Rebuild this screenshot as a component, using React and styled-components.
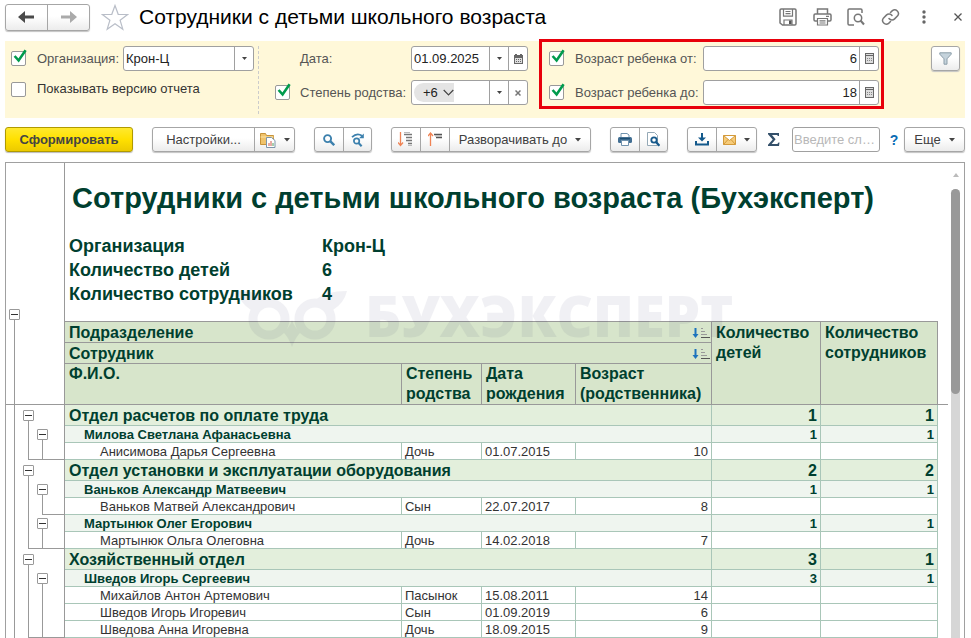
import React from "react";
import styled, { createGlobalStyle, css } from "styled-components";

const GlobalStyle = createGlobalStyle`
  *, *::before, *::after { box-sizing: border-box; }
  body {
    margin: 0;
    background: #fff;
    color: #404040;
    font-family: "Liberation Sans", Arial, sans-serif;
    font-size: 13px;
    line-height: 16px;
  }
  button, input, select { font: inherit; color: inherit; margin: 0; padding: 0; }
  button { cursor: pointer; }
  svg { display: block; flex: none; }
`;

const Page = styled.main`
  padding: 3px 6px 0 5px;
`;

/* ---------- title bar ---------- */

const TitleBar = styled.header`
  display: flex;
  align-items: center;
  height: 28px;
  margin-bottom: 10px;
`;

const buttonFace = css`
  background: linear-gradient(#fff, #fff 45%, #ececec);
  border: 1px solid #a6a6a6;
  box-shadow: 0 1px 1px #c4c4c4;
`;

const ButtonGroup = styled.div`
  display: flex;
  flex: none;
  height: 25px;
  border-radius: 3px;
  ${buttonFace}
`;

const NavGroup = styled(ButtonGroup)`
  width: 85px;
  height: 27px;
`;

const GroupButton = styled.button`
  display: flex;
  flex: ${(p) => (p.$width ? "none" : 1)};
  width: ${(p) => (p.$width ? `${p.$width}px` : "auto")};
  align-items: center;
  justify-content: center;
  gap: 8px;
  border: 0;
  background: none;
  white-space: nowrap;
  & + & { border-left: 1px solid #a6a6a6; }
`;

const PlainButton = styled.button`
  display: flex;
  flex: none;
  align-items: center;
  justify-content: center;
  border: 0;
  background: none;
`;

const StarButton = styled(PlainButton)`
  margin: 0 10px 0 11px;
`;

const Title = styled.h1`
  flex: 1;
  margin: 0;
  color: #000;
  font-size: 21px;
  font-weight: 400;
  line-height: 24px;
  white-space: nowrap;
`;

const TitleTools = styled.div`
  display: flex;
  align-items: center;
  gap: 20px;
`;

const ToolButton = styled(PlainButton)`
  width: 14px;
  height: 20px;
`;

/* ---------- filters ---------- */

const Filters = styled.section`
  display: flex;
  align-items: flex-start;
  height: 77px;
  padding: 5px 5px 0 6px;
  background: #fff8d9;
`;

const FilterColumn = styled.div`
  display: grid;
  flex: ${(p) => (p.$width ? "none" : 1)};
  width: ${(p) => (p.$width ? `${p.$width}px` : "auto")};
  gap: ${(p) => p.$gap}px;
`;

const HighlightedColumn = styled(FilterColumn)`
  position: relative;
  margin: 0 52px 0 21px;
  &::after {
    content: "";
    position: absolute;
    inset: -7px -5px -4px -10px;
    border: 3px solid #e8000b;
    pointer-events: none;
  }
`;

const FilterRow = styled.div`
  display: grid;
  grid-template-columns: 15px ${(p) => p.$cols};
  align-items: center;
  white-space: nowrap;
`;

const FilterLabel = styled.label`
  grid-column: 2;
  padding-left: ${(p) => p.$indent || 11}px;
  color: ${(p) => (p.$dark ? "#333" : "#555")};
`;

const Divider = styled.div`
  height: 68px;
  margin: 0 16px 0 4px;
  border-left: 1px dashed #ccc;
`;

const CheckHolder = styled.span`
  position: relative;
  width: 15px;
  height: 15px;
  input {
    display: block;
    width: 15px;
    height: 15px;
    appearance: none;
    border: 1px solid #999;
    border-radius: 2px;
    background: #fff;
  }
  svg {
    position: absolute;
    left: 2px;
    top: -2px;
    pointer-events: none;
  }
  input:not(:checked) + svg { display: none; }
`;

const Field = styled.div`
  display: flex;
  height: 25px;
  border: 1px solid #a0a0a0;
  border-radius: 3px;
  background: #fff;
  color: #222;
  overflow: hidden;
  input, select {
    flex: 1;
    min-width: 0;
    width: 0;
    padding: 0 2px;
    border: 0;
    outline: 0;
    appearance: none;
    background: none;
    text-align: ${(p) => (p.$number ? "right" : "left")};
  }
`;

const FieldButton = styled.button`
  display: flex;
  flex: none;
  width: 19px;
  align-items: center;
  justify-content: center;
  border: 0;
  border-left: 1px solid #a0a0a0;
  background: none;
`;

const SelectArrow = styled.span`
  display: flex;
  width: 19px;
  align-items: center;
  justify-content: center;
  border-left: 1px solid #a0a0a0;
`;

const ChipArea = styled.div`
  flex: 1;
  padding: 2px;
`;

const Chip = styled.button`
  display: flex;
  align-items: center;
  gap: 5px;
  height: 19px;
  padding: 0 0 0 9px;
  border: 0;
  border-radius: 10px 0 0 10px;
  background: #e4e4e4;
`;

const FunnelButton = styled.button`
  display: flex;
  flex: none;
  width: 29px;
  height: 25px;
  align-items: center;
  justify-content: center;
  border-radius: 3px;
  ${buttonFace}
`;

/* ---------- toolbar ---------- */

const Toolbar = styled.div`
  display: flex;
  align-items: center;
  gap: 19px;
  margin: 9px 0 10px;
`;

const GenerateButton = styled.button`
  flex: none;
  width: 128px;
  height: 25px;
  border: 1px solid #b09a00;
  border-radius: 3px;
  background: linear-gradient(#ffe92e, #ffe000 50%, #ecca00);
  box-shadow: 0 1px 1px #bbb;
  color: #444;
  font-weight: 700;
`;

const SearchTools = styled.div`
  display: flex;
  flex: 1;
  min-width: 0;
  align-items: center;
  margin: 0 -13px 0 -8px;
`;

const SearchInput = styled.input`
  flex: 1;
  width: 0;
  min-width: 0;
  height: 25px;
  margin: 0 10px 0 12px;
  padding: 0 1px;
  border: 1px solid #a0a0a0;
  border-radius: 3px;
  background: #fff;
  text-overflow: ellipsis;
  &::placeholder { color: #b8b8b8; opacity: 1; }
`;

const HelpButton = styled(PlainButton)`
  width: 8px;
  color: #0a6cb4;
  font-size: 14px;
  font-weight: 700;
`;

/* ---------- report ---------- */

const Report = styled.section`
  position: relative;
  display: flex;
  border: 1px solid #a0a0a0;
  border-bottom: 0;
`;

const Sheet = styled.div`
  flex: 1;
  min-width: 0;
  color: #003f2f;
`;

const SheetTop = styled.div`
  display: flex;
  height: 158px;
`;

const TopGutter = styled.div`
  display: flex;
  flex: none;
  width: 59px;
  align-items: flex-end;
  padding-left: 1px;
  border-right: 1px solid #999;
`;

const SheetHead = styled.div`
  padding: 17px 0 0 4px;
  font-weight: 700;
`;

const ReportTitle = styled.h2`
  margin: 0 0 18px 3px;
  font-size: 29px;
  line-height: 36px;
  white-space: nowrap;
`;

const Params = styled.dl`
  display: grid;
  grid-template-columns: 253px auto;
  margin: 0;
  font-size: 18px;
  line-height: 24px;
  dt, dd { margin: 0; white-space: nowrap; }
`;

const Table = styled.table`
  width: 100%;
  table-layout: fixed;
  border-collapse: separate;
  border-spacing: 0;
  th, td {
    padding: 1px 3px 0 4px;
    border: solid #a9c6b8;
    border-width: 0 1px 1px 0;
    text-align: left;
    vertical-align: top;
    white-space: nowrap;
  }
`;

const HeadCell = styled.th`
  && {
    height: ${(p) => p.$h}px;
    padding-top: ${(p) => (p.$flush ? 0 : 1)}px;
    border-color: #999;
    border-top-width: ${(p) => (p.$top ? 1 : 0)}px;
    background: #d7e5cb;
    font-size: 16px;
    line-height: ${(p) => (p.$single ? 19 : 20)}px;
  }
`;

const HeadInner = styled.div`
  display: flex;
  align-items: center;
  justify-content: space-between;
  margin-right: -2px;
`;

const GutterCell = styled.td`
  && {
    height: ${(p) => p.$h}px;
    padding: 0 0 0 1px;
    border-color: #999;
    border-bottom-width: ${(p) => (p.$frozen ? 1 : 0)}px;
  }
`;

const TailCell = styled.td`
  && {
    padding: 0;
    border-color: #999;
    border-right-width: 0;
    border-bottom-width: ${(p) => (p.$frozen ? 1 : 0)}px;
  }
`;

const Branches = styled.div`
  display: flex;
  height: ${(p) => p.$h}px;
`;

const Slot = styled.div`
  position: relative;
  display: flex;
  width: 14px;
  min-height: 13px;
  align-items: center;
  padding-left: 2px;
  ${(p) => p.$line && css`
    &::before {
      content: "";
      position: absolute;
      left: 7px;
      top: ${p.$line === "below" ? "50%" : 0};
      bottom: 0;
      width: 1px;
      background: #999;
    }
  `}
  ${(p) => p.$corner && css`
    &::after {
      content: "";
      position: absolute;
      left: ${p.$corner === "start" ? 7 : 0}px;
      right: 0;
      bottom: 0;
      height: 1px;
      background: #999;
    }
  `}
`;

const BranchTail = styled.div`
  flex: 1;
  border-bottom: ${(p) => (p.$closed ? "1px solid #999" : 0)};
`;

const ToggleButton = styled.button`
  position: relative;
  z-index: 1;
  display: flex;
  width: 11px;
  height: 11px;
  align-items: center;
  justify-content: center;
  border: 1px solid #999;
  border-radius: 1px;
  background: #fff;
  &::before {
    content: "";
    width: 7px;
    height: 1px;
    background: #333;
  }
`;

const rowKinds = {
  group: { height: 21, font: "700 16px/19px", bg: "#e3efdc", indent: 4, color: "#003f2f" },
  person: { height: 17, font: "700 13px/15px", bg: "#eff5ef", indent: 19, color: "#003f2f" },
  child: { height: 17, font: "400 13px/15px", bg: "#fff", indent: 35, color: "#333" },
};

const Cell = styled.td`
  && {
    height: ${(p) => rowKinds[p.$kind].height}px;
    padding-left: ${(p) => (p.$name ? rowKinds[p.$kind].indent : 3)}px;
    background: ${(p) => rowKinds[p.$kind].bg};
    color: ${(p) => rowKinds[p.$kind].color};
    font: ${(p) => rowKinds[p.$kind].font} "Liberation Sans", Arial, sans-serif;
    text-align: ${(p) => (p.$right ? "right" : "left")};
  }
`;

const ScrollBar = styled.div`
  display: flex;
  flex-direction: column;
  align-items: center;
  width: 9px;
  margin: 9px 4px 0 3px;
`;

const ScrollTrack = styled.div`
  flex: 1;
  width: 9px;
  margin-top: 11px;
  border-radius: 5px 5px 0 0;
  background: #d6d6d6;
`;

const ScrollThumb = styled.div`
  height: 205px;
  border-radius: 5px;
  background: #999;
`;

const Watermark = styled.div`
  position: absolute;
  left: 230px;
  top: 127px;
  display: flex;
  align-items: flex-start;
  gap: 17px;
  color: #141450;
  opacity: 0.06;
  font: 800 56px/50px "Open Sans", "Noto Sans", sans-serif;
  pointer-events: none;
`;

/* ---------- icons ---------- */

const Arrow = ({ flip, color }) => (
  <svg width="17" height="12" viewBox="0 0 17 12" fill={color}>
    <path transform={flip ? "translate(17 0) scale(-1 1)" : undefined} d="M0 6 7 0v4.5h9v3H7V12z" />
  </svg>
);

const Star = () => (
  <svg width="28" height="27" viewBox="0 0 28 27" fill="#fff" stroke="#b9bec8" strokeWidth="1.2">
    <path d="M14 1.5 17.2 10.3 26.6 10.5 19.1 16.2 21.8 25.2 14 19.8 6.2 25.2 8.9 16.2 1.4 10.5 10.8 10.3z" />
  </svg>
);

const Caret = () => (
  <svg width="6" height="4" viewBox="0 0 6 4" fill="#444"><path d="M0 0h6L3 3.5z" /></svg>
);

const SmallCaret = () => (
  <svg width="5" height="3" viewBox="0 0 5 3" fill="#444"><path d="M0 0h5L2.5 3z" /></svg>
);

const Tick = () => (
  <svg width="14" height="14" viewBox="0 0 14 14" fill="none" stroke="#009b4c" strokeWidth="2.6">
    <path d="M1.6 7 5.6 11.5 12.6 1.2" />
  </svg>
);

const CalendarIcon = () => (
  <svg width="9" height="10" viewBox="0 0 9 10">
    <path fill="#666" d="M0 1h1V0h2v1h3V0h2v1h1v9H0z" />
    <path fill="#ddd" d="M1 4h7v5H1z" />
    <path stroke="#666" strokeWidth="1" strokeDasharray="1 1" d="M2 5.5h6M2 7.5h6" />
  </svg>
);

const CalcIcon = () => (
  <svg width="9" height="11" viewBox="0 0 9 11" fill="none" stroke="#666">
    <rect x=".5" y=".5" width="8" height="10" fill="#ddd" />
    <path d="M1 2.5h7" />
    <path stroke="#888" strokeDasharray="1 1" d="M2 5.5h6M2 7.5h6" />
  </svg>
);

const ClearIcon = () => (
  <svg width="6" height="6" viewBox="0 0 6 6" stroke="#777" strokeWidth="1.5"><path d="m.5.5 5 5m0-5-5 5" /></svg>
);

const ChevronIcon = () => (
  <svg width="11" height="7" viewBox="0 0 11 7" fill="none" stroke="#444" strokeWidth="1.2"><path d="m.7 1 4.8 5 4.8-5" /></svg>
);

const FunnelIcon = () => (
  <svg width="13" height="13" viewBox="0 0 13 13" fill="#c5d3dc" stroke="#8b9da9">
    <path d="M.8.8h11.4v1.4L8 6.8v5.4H5V6.8L.8 2.2z" />
  </svg>
);

const FloppyIcon = () => (
  <svg width="18" height="18" viewBox="0 0 18 18" fill="none" stroke="#777" strokeWidth="1.5">
    <path d="M1 2.2Q1 1 2.2 1h13.6Q17 1 17 2.2v13.6q0 1.2-1.2 1.2H3.5L1 15z" />
    <path d="M4.5 1v7.2h9V1M6.5 3.5h5M6.5 5.7h5" strokeWidth="1.2" />
    <path d="M5 17v-5h8v5" strokeWidth="1.2" /><path d="M10 12.5h2.5V16H10z" fill="#555" stroke="none" />
  </svg>
);

const PrinterIcon = () => (
  <svg width="19" height="18" viewBox="0 0 19 18" fill="none" stroke="#777" strokeWidth="1.5">
    <path d="M4.5 6V1h10v5M4.5 13H2.2Q1 13 1 11.8V7.2Q1 6 2.2 6h14.6Q18 6 18 7.2v4.6q0 1.2-1.2 1.2h-2.3" />
    <path d="M4.5 10.5h10v6.5h-10zM6.5 12.8h6M6.5 15h6M13 8.3h3" strokeWidth="1.2" />
  </svg>
);

const PreviewIcon = () => (
  <svg width="18" height="18" viewBox="0 0 18 18" fill="none" stroke="#777" strokeWidth="1.5">
    <path d="M7 17H2.2Q1 17 1 15.8V2.2Q1 1 2.2 1h11.6Q15 1 15 2.2V5" />
    <circle cx="11" cy="10" r="3.7" /><path d="m13.5 12.5 3.5 4" strokeWidth="2" />
  </svg>
);

const LinkIcon = () => (
  <svg width="19" height="18" viewBox="0 0 24 24" fill="none" stroke="#777" strokeWidth="2" strokeLinecap="round">
    <path d="M10 14a5 5 0 0 0 7.5.5l4-4a5 5 0 0 0-7-7L12 6" />
    <path d="M14 10a5 5 0 0 0-7.5-.5l-4 4a5 5 0 0 0 7 7L12 18" />
  </svg>
);

const DotsIcon = () => (
  <svg width="4" height="14" viewBox="0 0 4 14" fill="#666">
    <circle cx="2" cy="2" r="1.7" /><circle cx="2" cy="7" r="1.7" /><circle cx="2" cy="12" r="1.7" />
  </svg>
);

const CloseIcon = () => (
  <svg width="8" height="8" viewBox="0 0 8 8" stroke="#555" strokeWidth="1.3"><path d="m.5.5 7 7m0-7-7 7" /></svg>
);

const FolderIcon = () => (
  <svg width="16" height="16" viewBox="0 0 16 16">
    <path d="M.5 12.5v-11h5l1 2h7v9z" fill="#f0c36b" stroke="#c79339" />
    <path d="M.5 5h13" stroke="#fbe3a8" />
    <path d="M6.5 5.5h5l3.5 3v7H6.5z" fill="#fff" stroke="#7d95aa" />
    <path d="M9 14v-3M11 14v-5" stroke="#d0584b" /><path d="M13 14v-3" stroke="#4fa05a" />
  </svg>
);

const MagnifierIcon = () => (
  <svg width="12" height="12" viewBox="0 0 12 12" fill="none" stroke="#3c80ad">
    <circle cx="4.6" cy="4.6" r="3.5" strokeWidth="1.9" /><path d="m7.2 7.2 4 4" strokeWidth="2.4" />
  </svg>
);

const MagnifierNextIcon = () => (
  <svg width="14" height="14" viewBox="0 0 14 14" fill="none" stroke="#3c80ad">
    <path d="M1 4.2Q6 -.8 11 2.8" strokeWidth="1.7" /><path d="M12.8.5v4.8H8z" fill="#3c80ad" stroke="none" />
    <circle cx="5.6" cy="8" r="2.7" strokeWidth="1.7" /><path d="m7.6 10 3 3.2" strokeWidth="2.1" />
  </svg>
);

const ExpandIcon = () => (
  <svg width="16" height="15" viewBox="0 0 16 15" fill="none">
    <path d="M2.5 0v13M0 10.5l2.5 3 2.5-3" stroke="#ef8354" strokeWidth="1.3" />
    <path d="M6 2.5h8M8 5.5h6M8 8.5h6M10 11.5h4" stroke="#777" strokeWidth="1.3" />
    <path d="M6 .5h6M10 13.5h4" stroke="#bbb" />
  </svg>
);

const CollapseIcon = () => (
  <svg width="15" height="15" viewBox="0 0 15 15" fill="none">
    <path d="M2.5 14V1M0 4l2.5-3L5 4" stroke="#ef8354" strokeWidth="1.3" />
    <path d="M6 2.5h8M8 5.5h6" stroke="#555" strokeWidth="1.4" /><path d="M7 4h7" stroke="#aaa" />
  </svg>
);

const PrintColorIcon = () => (
  <svg width="14" height="13" viewBox="0 0 14 13">
    <path d="M3 4V.5h6L11 2v2" fill="#fff" stroke="#7193ae" />
    <rect y="4" width="14" height="6" rx="1.5" fill="#426f93" />
    <path d="M3.5 7.5h7v5h-7z" fill="#fff" stroke="#7193ae" />
    <path d="M2 5.7h10" stroke="#16476b" />
  </svg>
);

const PageSearchIcon = () => (
  <svg width="13" height="15" viewBox="0 0 13 15" fill="none">
    <path d="M.5 13.5V.5h7l3 3v10z" fill="#fff" stroke="#95a9b6" />
    <circle cx="7" cy="8" r="2.7" fill="#fff" stroke="#16598b" strokeWidth="1.8" />
    <path d="m9 10 3.5 3.8" stroke="#16598b" strokeWidth="2.3" />
  </svg>
);

const DownloadIcon = () => (
  <svg width="14" height="13" viewBox="0 0 14 13" fill="#13598b">
    <path d="M6 0h2v4.5h3L7 8.5 3 4.5h3zM0 8h2v2.5h10V8h2v4.5H0z" />
  </svg>
);

const MailIcon = () => (
  <svg width="13" height="10" viewBox="0 0 13 10" fill="#f6cb79" stroke="#d39a3a">
    <path d="M.5.5h12v9H.5zM.5.5l6 5 6-5M.5 9.5l4.5-5M12.5 9.5 8 4.5" />
  </svg>
);

const SigmaIcon = () => (
  <svg width="12" height="13" viewBox="0 0 12 13" fill="#34506a">
    <path d="M0 0h11v3h-1L9 2H4l3.6 4.3L3.6 11H9.3l1.2-1.5H11.5L11 13H0v-1.2L4.7 6.5 0 1.3z" />
  </svg>
);

const SortIcon = () => (
  <svg width="18" height="12" viewBox="0 0 18 12" fill="none">
    <path d="M3.5 1v7" stroke="#1d73bd" strokeWidth="2" /><path d="M.5 7h6l-3 4z" fill="#1d73bd" />
    <path d="M9 1.5h2M9 4.5h4M9 7.5h6" stroke="#999" /><path d="M9 10.5h9" stroke="#555" />
  </svg>
);

const ScrollUpIcon = () => (
  <svg width="6" height="6" viewBox="0 0 6 6" fill="#bbb"><path d="M0 5h6L3 1z" /></svg>
);

const OwlIcon = () => (
  <svg width="112" height="57" viewBox="0 0 112 57" fill="none" stroke="currentColor" strokeWidth="9">
    <circle cx="33" cy="29" r="16" />
    <circle cx="79" cy="29" r="16" />
    <path
      fill="currentColor"
      stroke="none"
      d="M46 41Q53 40 56 30Q59 40 66 41Q60 46 56 57Q52 46 46 41zM1 1Q22 1 33 10L15 20Q4 13 1 1zM111 1Q90 1 79 10L97 20Q108 13 111 1z"
    />
  </svg>
);

/* ---------- composed parts ---------- */

const Check = ({ id, checked, label }) => (
  <CheckHolder>
    <input type="checkbox" id={id} defaultChecked={checked} aria-label={label} />
    <Tick />
  </CheckHolder>
);

const Toggle = () => <ToggleButton type="button" aria-label="Свернуть" />;

const cornerOf = (marks, i) => {
  const first = marks.indexOf("L");
  if (first < 0 || i < first) return null;
  return i === first ? "start" : "through";
};

const lineOf = { T: "below", "|": "full", L: "full" };

/* marks, one per level: "T" toggle, "|" line, "L" closing corner */
const Tree = ({ height, marks }) => (
  <Branches $h={height}>
    {marks.split("").map((m, i) => (
      <Slot key={i} $line={lineOf[m]} $corner={cornerOf(marks, i)}>
        {m === "T" && <Toggle />}
      </Slot>
    ))}
    <BranchTail $closed={marks.includes("L")} />
  </Branches>
);

const rows = [
  { kind: "group", tree: "|T ", name: "Отдел расчетов по оплате труда", kids: 1, staff: 1 },
  { kind: "person", tree: "||T", name: "Милова Светлана Афанасьевна", kids: 1, staff: 1 },
  { kind: "child", tree: "|LL", name: "Анисимова Дарья Сергеевна", rel: "Дочь", born: "01.07.2015", age: 10 },
  { kind: "group", tree: "|T ", name: "Отдел установки и эксплуатации оборудования", kids: 2, staff: 2 },
  { kind: "person", tree: "||T", name: "Ваньков Александр Матвеевич", kids: 1, staff: 1 },
  { kind: "child", tree: "||L", name: "Ваньков Матвей Александрович", rel: "Сын", born: "22.07.2017", age: 8 },
  { kind: "person", tree: "||T", name: "Мартынюк Олег Егорович", kids: 1, staff: 1 },
  { kind: "child", tree: "|LL", name: "Мартынюк Ольга Олеговна", rel: "Дочь", born: "14.02.2018", age: 7 },
  { kind: "group", tree: "|T ", name: "Хозяйственный отдел", kids: 3, staff: 1 },
  { kind: "person", tree: "||T", name: "Шведов Игорь Сергеевич", kids: 3, staff: 1 },
  { kind: "child", tree: "|||", name: "Михайлов Антон Артемович", rel: "Пасынок", born: "15.08.2011", age: 14 },
  { kind: "child", tree: "|||", name: "Шведов Игорь Игоревич", rel: "Сын", born: "01.09.2019", age: 6 },
  { kind: "child", tree: "|LL", name: "Шведова Анна Игоревна", rel: "Дочь", born: "18.09.2015", age: 9 },
];

const ReportRow = ({ row }) => (
  <tr>
    <GutterCell $h={rowKinds[row.kind].height}>
      <Tree height={rowKinds[row.kind].height} marks={row.tree} />
    </GutterCell>
    <Cell $kind={row.kind} $name colSpan={row.kind === "child" ? 1 : 4}>{row.name}</Cell>
    {row.kind === "child" && (
      <>
        <Cell $kind="child">{row.rel}</Cell>
        <Cell $kind="child">{row.born}</Cell>
        <Cell $kind="child" $right>{row.age}</Cell>
      </>
    )}
    <Cell $kind={row.kind} $right>{row.kids}</Cell>
    <Cell $kind={row.kind} $right>{row.staff}</Cell>
    <TailCell />
  </tr>
);

export default function App() {
  return (
    <Page>
      <GlobalStyle />
      <TitleBar>
        <NavGroup>
          <GroupButton type="button" aria-label="Назад"><Arrow color="#4a4a4a" /></GroupButton>
          <GroupButton type="button" aria-label="Вперед"><Arrow flip color="#aaa" /></GroupButton>
        </NavGroup>
        <StarButton type="button" aria-label="В избранное"><Star /></StarButton>
        <Title>Сотрудники с детьми школьного возраста</Title>
        <TitleTools>
          <ToolButton type="button" aria-label="Сохранить"><FloppyIcon /></ToolButton>
          <ToolButton type="button" aria-label="Печать"><PrinterIcon /></ToolButton>
          <ToolButton type="button" aria-label="Просмотр"><PreviewIcon /></ToolButton>
          <ToolButton type="button" aria-label="Ссылка"><LinkIcon /></ToolButton>
          <ToolButton type="button" aria-label="Меню"><DotsIcon /></ToolButton>
          <ToolButton type="button" aria-label="Закрыть"><CloseIcon /></ToolButton>
        </TitleTools>
      </TitleBar>

      <Filters>
        <FilterColumn $width={243} $gap={10}>
          <FilterRow $cols="1fr 131px">
            <Check id="use-org" checked label="Отбор по организации" />
            <FilterLabel htmlFor="org">Организация:</FilterLabel>
            <Field>
              <select id="org"><option>Крон-Ц</option></select>
              <SelectArrow><SmallCaret /></SelectArrow>
            </Field>
          </FilterRow>
          <FilterRow $cols="1fr">
            <Check id="show-version" />
            <FilterLabel htmlFor="show-version" $dark>Показывать версию отчета</FilterLabel>
          </FilterRow>
        </FilterColumn>
        <Divider />
        <FilterColumn $width={253} $gap={9}>
          <FilterRow $cols="1fr 117px">
            <FilterLabel htmlFor="date" $indent={10}>Дата:</FilterLabel>
            <Field>
              <input id="date" defaultValue="01.09.2025" />
              <FieldButton type="button" aria-label="Выбрать"><SmallCaret /></FieldButton>
              <FieldButton type="button" aria-label="Календарь"><CalendarIcon /></FieldButton>
            </Field>
          </FilterRow>
          <FilterRow $cols="1fr 117px">
            <Check id="use-kinship" checked />
            <FilterLabel htmlFor="use-kinship" $indent={10}>Степень родства:</FilterLabel>
            <Field>
              <ChipArea><Chip type="button">+6<ChevronIcon /></Chip></ChipArea>
              <FieldButton type="button" aria-label="Выбрать"><SmallCaret /></FieldButton>
              <FieldButton type="button" aria-label="Очистить"><ClearIcon /></FieldButton>
            </Field>
          </FilterRow>
        </FilterColumn>
        <HighlightedColumn $gap={9}>
          <FilterRow $cols="139px 1fr">
            <Check id="use-from" checked label="Отбор по возрасту от" />
            <FilterLabel htmlFor="age-from">Возраст ребенка от:</FilterLabel>
            <Field $number>
              <input id="age-from" defaultValue="6" />
              <FieldButton type="button" aria-label="Калькулятор"><CalcIcon /></FieldButton>
            </Field>
          </FilterRow>
          <FilterRow $cols="139px 1fr">
            <Check id="use-to" checked label="Отбор по возрасту до" />
            <FilterLabel htmlFor="age-to">Возраст ребенка до:</FilterLabel>
            <Field $number>
              <input id="age-to" defaultValue="18" />
              <FieldButton type="button" aria-label="Калькулятор"><CalcIcon /></FieldButton>
            </Field>
          </FilterRow>
        </HighlightedColumn>
        <FunnelButton type="button" aria-label="Отбор"><FunnelIcon /></FunnelButton>
      </Filters>

      <Toolbar>
        <GenerateButton type="button">Сформировать</GenerateButton>
        <ButtonGroup>
          <GroupButton type="button" $width={101}>Настройки...</GroupButton>
          <GroupButton type="button" $width={40} aria-label="Варианты"><FolderIcon /><Caret /></GroupButton>
        </ButtonGroup>
        <ButtonGroup>
          <GroupButton type="button" $width={28} aria-label="Найти"><MagnifierIcon /></GroupButton>
          <GroupButton type="button" $width={28} aria-label="Найти далее"><MagnifierNextIcon /></GroupButton>
        </ButtonGroup>
        <ButtonGroup>
          <GroupButton type="button" $width={28} aria-label="Развернуть"><ExpandIcon /></GroupButton>
          <GroupButton type="button" $width={29} aria-label="Свернуть"><CollapseIcon /></GroupButton>
          <GroupButton type="button" $width={141}>Разворачивать до<Caret /></GroupButton>
        </ButtonGroup>
        <ButtonGroup>
          <GroupButton type="button" $width={28} aria-label="Печать"><PrintColorIcon /></GroupButton>
          <GroupButton type="button" $width={28} aria-label="Предпросмотр"><PageSearchIcon /></GroupButton>
        </ButtonGroup>
        <ButtonGroup>
          <GroupButton type="button" $width={28} aria-label="Сохранить"><DownloadIcon /></GroupButton>
          <GroupButton type="button" $width={40} aria-label="Отправить"><MailIcon /><Caret /></GroupButton>
        </ButtonGroup>
        <SearchTools>
          <PlainButton type="button" aria-label="Сумма"><SigmaIcon /></PlainButton>
          <SearchInput aria-label="Поиск" placeholder="Введите слово для поиска" />
          <HelpButton type="button">?</HelpButton>
        </SearchTools>
        <ButtonGroup>
          <GroupButton type="button" $width={59}>Еще<Caret /></GroupButton>
        </ButtonGroup>
      </Toolbar>

      <Report>
        <Sheet>
          <SheetTop>
            <TopGutter>
              <Slot $line="below"><Toggle /></Slot>
            </TopGutter>
            <SheetHead>
              <ReportTitle>Сотрудники с детьми школьного возраста (Бухэксперт)</ReportTitle>
              <Params>
                <dt>Организация</dt><dd>Крон-Ц</dd>
                <dt>Количество детей</dt><dd>6</dd>
                <dt>Количество сотрудников</dt><dd>4</dd>
              </Params>
            </SheetHead>
          </SheetTop>
          <Table>
            <colgroup>
              <col width="59" /><col /><col width="80" /><col width="94" />
              <col width="136" /><col width="109" /><col width="117" /><col width="10" />
            </colgroup>
            <thead>
              <tr>
                <GutterCell rowSpan={3} $h={84} $frozen><Tree height={83} marks="|" /></GutterCell>
                <HeadCell colSpan={4} $h={22} $top $single><HeadInner>Подразделение<SortIcon /></HeadInner></HeadCell>
                <HeadCell rowSpan={3} $top>Количество<br />детей</HeadCell>
                <HeadCell rowSpan={3} $top>Количество<br />сотрудников</HeadCell>
                <TailCell rowSpan={3} $frozen />
              </tr>
              <tr>
                <HeadCell colSpan={4} $h={21} $single><HeadInner>Сотрудник<SortIcon /></HeadInner></HeadCell>
              </tr>
              <tr>
                <HeadCell $h={41} $flush>Ф.И.О.</HeadCell>
                <HeadCell $flush>Степень<br />родства</HeadCell>
                <HeadCell $flush>Дата<br />рождения</HeadCell>
                <HeadCell $flush>Возраст<br />(родственника)</HeadCell>
              </tr>
            </thead>
            <tbody>
              {rows.map((row) => <ReportRow key={row.name} row={row} />)}
            </tbody>
          </Table>
        </Sheet>
        <ScrollBar aria-hidden="true">
          <ScrollUpIcon />
          <ScrollTrack><ScrollThumb /></ScrollTrack>
        </ScrollBar>
        <Watermark aria-hidden="true"><OwlIcon />БУХЭКСПЕРТ</Watermark>
      </Report>
    </Page>
  );
}
